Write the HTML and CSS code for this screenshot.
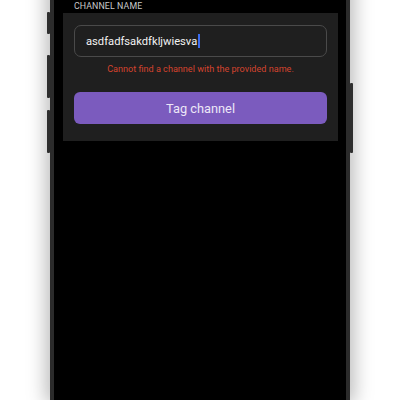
FILE: index.html
```html
<!DOCTYPE html>
<html>
<head>
<meta charset="utf-8">
<link rel="stylesheet" href="styles.css">
</head>
<body>
<div class="stage">
  <div class="phone">
    <span class="btn btn-l1"></span>
    <span class="btn btn-l2"></span>
    <span class="btn btn-l3"></span>
    <span class="btn btn-r1"></span>
    <div class="screen">
      <div class="label">CHANNEL NAME</div>
      <div class="card">
        <div class="input"><span class="value">asdfadfsakdfkljwiesva</span><span class="caret"></span></div>
        <div class="error">Cannot find a channel with the provided name.</div>
        <div class="submit">Tag channel</div>
      </div>
    </div>
  </div>
</div>
</body>
</html>
```
FILE: styles.css
```css
html, body {
  margin: 0;
  padding: 0;
  background: #ffffff;
  width: 400px;
  height: 400px;
  overflow: hidden;
}
.stage {
  display: flex;
  justify-content: center;
}
.phone {
  position: relative;
  width: 292px;
  height: 420px;
  margin-top: -20px;
  background: #000;
  border: 4px solid #2b2b2b;
  border-top: none;
  border-bottom: none;
  box-shadow: 0 0 18px 4px rgba(0,0,0,0.28);
  font-family: "Roboto", "Liberation Sans", sans-serif;
}
.btn {
  position: absolute;
  width: 3px;
  background: #2e2e2e;
  border-radius: 1px;
}
.btn-l1 { left: -7px; top: 32px; height: 22px; }
.btn-l2 { left: -7px; top: 75px; height: 43px; }
.btn-l3 { left: -7px; top: 130px; height: 43px; }
.btn-r1 { right: -7px; top: 103px; height: 70px; }
.screen {
  padding: 20px 8px 0 9px;
  display: flex;
  flex-direction: column;
}
.label {
  color: #c8c8c8;
  font-size: 8.8px;
  letter-spacing: 0.1px;
  line-height: 13px;
  padding-left: 11px;
}
.card {
  background: #1f1f1f;
  padding: 12px 11px 17px 11px;
  display: flex;
  flex-direction: column;
}
.input {
  height: 32px;
  box-sizing: border-box;
  border: 1px solid #4a4a4a;
  border-radius: 7px;
  display: flex;
  align-items: center;
  padding-left: 11px;
  color: #f2f2f2;
  font-size: 11.2px;
}
.caret {
  display: inline-block;
  width: 1.5px;
  height: 14px;
  background: #3b6cf0;
  margin-left: 1px;
}
.error {
  color: #d4432e;
  font-size: 9.1px;
  text-align: center;
  line-height: 12px;
  margin-top: 6px;
  margin-bottom: 17px;
}
.submit {
  height: 32px;
  border-radius: 6px;
  background: #7b5bbe;
  color: #ece6f7;
  font-size: 12.8px;
  display: flex;
  align-items: center;
  justify-content: center;
}
```
